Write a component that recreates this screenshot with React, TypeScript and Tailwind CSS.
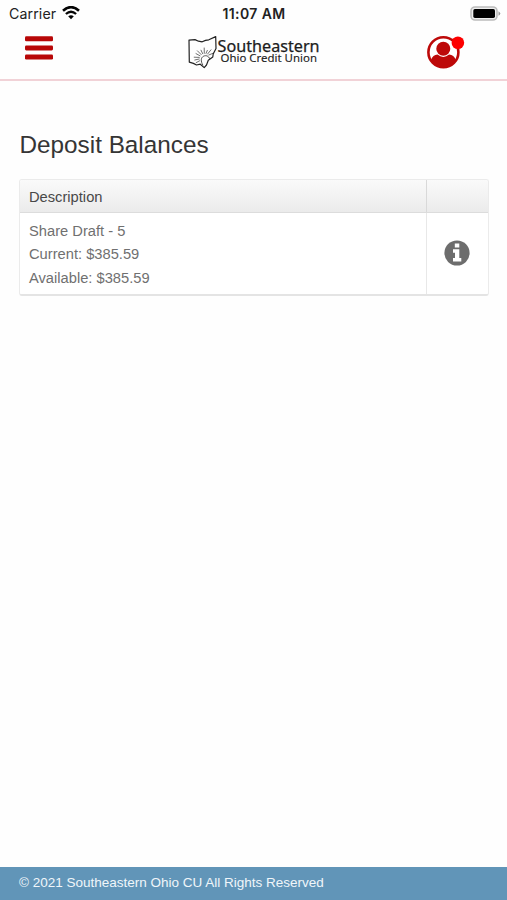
function StatusBar() {
  return (
    <div className="flex h-[27px] items-center justify-between pl-[9px] pr-[6px] font-['Inter','Liberation_Sans',sans-serif] text-[#222]">
      <div className="flex w-[160px] items-center">
        <span className="text-[14.2px] tracking-[0.1px]">Carrier</span>
        <svg className="ml-[6px]" width="18" height="14" viewBox="0 0 18 14" fill="none" stroke="#050505">
          <path d="M1 4.7Q9-2.4 17 4.7" strokeWidth="2.6" />
          <path d="M3.9 8Q9 3.4 14.1 8" strokeWidth="2.3" />
          <path d="M6.2 10.3Q9 8 11.8 10.3L9 13.3Z" fill="#050505" stroke="none" />
        </svg>
      </div>
      <span className="mr-[2px] pb-px text-[14px] font-semibold tracking-[0.4px]">11:07 AM</span>
      <div className="flex w-[160px] justify-end">
        <svg width="31" height="15" viewBox="0 0 31 15">
          <rect x="1" y="1" width="26" height="13" rx="4" fill="#eee" stroke="#bcbcbc" strokeWidth="1.6" />
          <rect x="3.3" y="3.1" width="21.7" height="8.8" rx="1.6" fill="#000" />
          <path d="M28.5 5.2Q32 7.5 28.5 9.8Z" fill="#999" />
        </svg>
      </div>
    </div>
  );
}

function Logo() {
  return (
    <svg width="134" height="36" viewBox="186 34 134 36" role="img" aria-label="Southeastern Ohio Credit Union">
      <g fill="none" stroke="#222" strokeLinejoin="round" strokeLinecap="round">
        <path
          d="M189 40.2L195 39.6L198.5 41.2L202.2 41.8L205.5 40.4L208.8 39.8L215.7 36.6L216 48.4L213.2 54L212.8 57L208.3 60.2L206.5 65L204.2 67.6L200.3 64.2L196.5 65L193.4 63.4L189.3 62.2Z"
          strokeWidth="1.2"
        />
        <path
          d="M199.3 57.4L194.2 57.2M200 55.8L196 53.6M201.2 54.6L197.4 50.8M202.7 53.7L201 50.2M204.3 53.3L204.2 48M206 53.4L207.3 50.4M207.6 54L211 49.8M208.8 55L213.2 53.2M199.2 59L194.8 60M199.6 60.8L196.2 62.6"
          strokeWidth="0.65"
        />
        <path d="M202.8 65C200.4 61 200.9 57.5 203.6 56.2C206 55 208.5 56 209.6 58.4" strokeWidth="0.8" />
      </g>
      <text x="217.6" y="51.9" textLength="102" lengthAdjust="spacingAndGlyphs" fontSize="15.8" fill="#1c1c1c" stroke="#1c1c1c" strokeWidth="0.25" fontFamily="'Noto Sans', sans-serif">
        Southeastern
      </text>
      <text x="220.5" y="61.9" textLength="96.5" lengthAdjust="spacingAndGlyphs" fontSize="11.4" fill="#222" stroke="#222" strokeWidth="0.12" fontFamily="'Noto Sans', sans-serif">
        Ohio Credit Union
      </text>
    </svg>
  );
}

function Header() {
  return (
    <header className="flex h-[54px] items-start justify-between border-b-2 border-[#f1d2d7] pl-[25px] pr-[42px]">
      <button aria-label="Menu" className="mt-[9.3px] w-[60px]">
        <svg width="28" height="25" viewBox="0 0 28 25" fill="#b80707">
          <rect y="0.2" width="28" height="5" rx="1.3" />
          <rect y="9.4" width="28" height="5" rx="1.3" />
          <rect y="18.6" width="28" height="5" rx="1.3" />
        </svg>
      </button>
      <div className="mt-[7px] ml-[15px]"><Logo /></div>
      <button aria-label="Account" className="mt-[8px] flex w-[60px] justify-end">
        <svg width="39" height="36" viewBox="0 0 39 36">
          <circle cx="17.4" cy="17.3" r="15" fill="#fff" stroke="#bd0909" strokeWidth="2.6" />
          <circle cx="17.3" cy="13.7" r="7" fill="#bd0909" />
          <path d="M5 25C6 21.5 8.5 20 11.5 19.6Q17.3 24.3 23.1 19.6C26.3 20 28.7 21.5 29.8 25C27 30 22.5 32.7 17.4 32.7S7.8 30 5 25Z" fill="#bd0909" />
          <circle cx="31.9" cy="7.8" r="6.3" fill="#fd0000" />
        </svg>
      </button>
    </header>
  );
}

export default function App() {
  return (
    <div className="flex h-[900px] flex-col bg-[#fefefe] font-['Liberation_Sans',Arial,sans-serif]">
      <StatusBar />
      <Header />
      <main className="flex-1 px-[19px] pt-[48px]">
        <h1 className="h-[50px] pl-[0.5px] text-[24.3px] leading-[31px] text-[#353535]">Deposit Balances</h1>
        <section className="flex h-[117px] w-[470px] flex-col overflow-hidden rounded-[3px] border border-b-2 border-[#ebebeb] border-b-[#e4e4e4] text-[14.7px]">
          <div className="flex h-[33px] shrink-0 border-b border-[#dcdcdc] bg-gradient-to-b from-[#fafafa] to-[#ebebeb] text-[#484848]">
            <div className="flex w-[407px] items-center border-r border-[#d9d9d9] pl-[9px] pt-[3px]">Description</div>
          </div>
          <div className="flex flex-1 bg-white text-[#707070]">
            <div className="w-[407px] border-r border-[#e8e8e8] pl-[9px] pt-[7px] leading-[23.3px]">
              <p>Share Draft - 5</p>
              <p>Current: $385.59</p>
              <p>Available: $385.59</p>
            </div>
            <div className="flex flex-1 items-center justify-center pr-[1px] pb-[1.5px]">
              <svg width="26" height="26" viewBox="0 0 26 26">
                <circle cx="13" cy="13" r="12.6" fill="#6d6d6d" />
                <path d="M10.8 3.5H15.3V7.5H10.8ZM9 9.3H15.3V17.9H17.3V21.5H9V17.9H11V12.8H9Z" fill="#fff" />
              </svg>
            </div>
          </div>
        </section>
      </main>
      <footer className="flex h-[33px] items-center bg-[#6195b8] pl-[19px] pb-[1px] text-[13.5px] text-[#f0f6fa]">
        © 2021 Southeastern Ohio CU All Rights Reserved
      </footer>
    </div>
  );
}
